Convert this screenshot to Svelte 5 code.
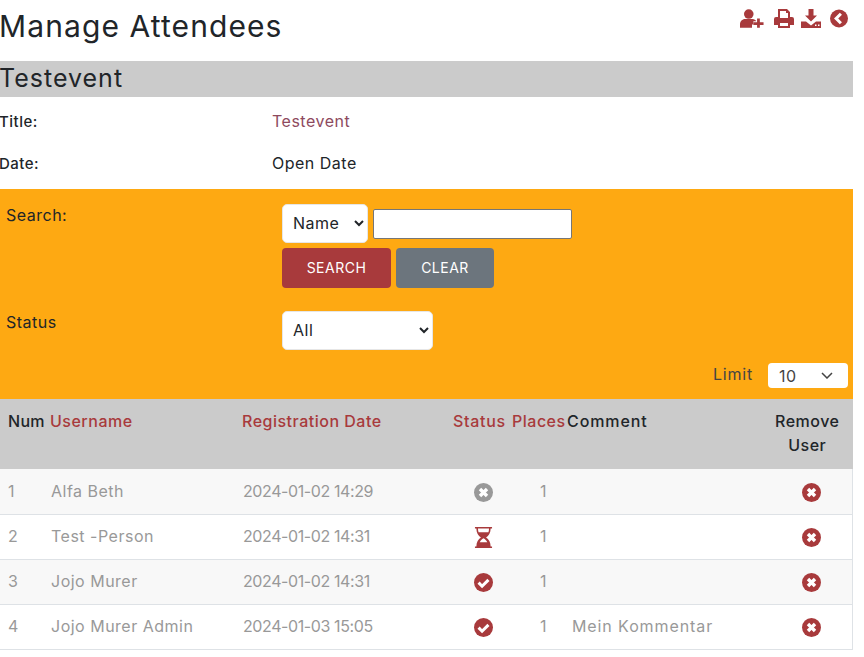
<script>
	const rows = [
		{ num: 1, name: 'Alfa Beth', date: '2024-01-02 14:29', status: 'off', places: 1, comment: '' },
		{ num: 2, name: 'Test -Person', date: '2024-01-02 14:31', status: 'wait', places: 1, comment: '' },
		{ num: 3, name: 'Jojo Murer', date: '2024-01-02 14:31', status: 'ok', places: 1, comment: '' },
		{ num: 4, name: 'Jojo Murer Admin', date: '2024-01-03 15:05', status: 'ok', places: 1, comment: 'Mein Kommentar' }
	];
</script>

{#snippet cross(color)}
	<svg class="state" viewBox="0 0 20 20" aria-hidden="true">
		<circle cx="10" cy="10" r="10" fill={color} />
		<path d="M6.300 6.300l7.400 7.400M13.700 6.300l-7.400 7.400" stroke="#fff" stroke-width="3.600" />
	</svg>
{/snippet}

<div class="page">
	<header class="top">
		<h1>Manage Attendees</h1>
		<div class="tools">
			<svg class="tool user" viewBox="0 0 26 20" aria-hidden="true">
				<circle cx="9.500" cy="5.200" r="5.200" />
				<path d="M0 20v-3.500C0 13 2.500 10.500 5.500 10.500h8c2 0 3.400 1 4 2.500h-3v3.500h-1.500V20z" />
				<path d="M14.500 14h4v-4h3v4h4v3h-4v3h-3v-3h-4z" />
			</svg>
			<svg class="tool print" viewBox="0 0 20 19" aria-hidden="true">
				<path fill-rule="evenodd" d="M4 0h9l3 3v5h2a2 2 0 0 1 2 2v6h-4v3H4v-3H0v-6a2 2 0 0 1 2-2h2zM6 2v7h8V4h-2V2zM6 14v3h8v-3z" />
			</svg>
			<svg class="tool load" viewBox="0 0 20 19" aria-hidden="true">
				<path d="M7.500 0h5v6.500h3.500L10 12.500 4 6.500h3.500z" />
				<path fill-rule="evenodd" d="M0 12.500h5l5 4 5-4h5V19H0zM14 15.500v1.500h1.500v-1.500zM17 15.500v1.500h1.500v-1.500z" />
			</svg>
			<svg class="tool back" viewBox="0 0 19 19" aria-hidden="true">
				<circle cx="9.500" cy="9.500" r="9.500" />
				<path d="M11.500 4.500L6.500 9.500l5 5" fill="none" stroke="#fff" stroke-width="3.200" />
			</svg>
		</div>
	</header>

	<h2>Testevent</h2>

	<dl class="info">
		<dt>Title:</dt>
		<dd class="link">Testevent</dd>
		<dt>Date:</dt>
		<dd>Open Date</dd>
	</dl>

	<section class="filters">
		<div class="filter-row search-row">
			<span class="filter-label">Search:</span>
			<div>
				<div class="inputs">
					<select class="field name-select"><option>Name</option></select>
					<input class="text" type="text" />
				</div>
				<div class="buttons">
					<button class="btn primary" type="button">SEARCH</button>
					<button class="btn secondary" type="button">CLEAR</button>
				</div>
			</div>
		</div>
		<div class="filter-row status-row">
			<span class="filter-label">Status</span>
			<select class="field status-select"><option>All</option></select>
		</div>
		<div class="limit-row">
			<span>Limit</span>
			<div class="limit-select">
				<span>10</span>
				<svg viewBox="0 0 12 7" aria-hidden="true"><path d="M1 1l5 5 5-5" fill="none" stroke="#444" stroke-width="1.500" /></svg>
			</div>
		</div>
	</section>

	<table>
		<thead>
			<tr>
				<th class="c-num">Num</th>
				<th class="c-name sort">Username</th>
				<th class="c-date sort">Registration Date</th>
				<th class="c-status sort">Status</th>
				<th class="c-places sort">Places</th>
				<th class="c-comment">Comment</th>
				<th class="c-remove">Remove User</th>
			</tr>
		</thead>
		<tbody>
			{#each rows as row (row.num)}
				<tr>
					<td class="c-num">{row.num}</td>
					<td class="c-name">{row.name}</td>
					<td class="c-date">{row.date}</td>
					<td class="c-status icon-cell">
						{#if row.status === 'off'}
							{@render cross('#999999')}
						{:else if row.status === 'wait'}
							<svg class="state glass" viewBox="0 0 20 22" aria-hidden="true">
								<path fill="#a83a3c" d="M1 0h18v1.500h-1.500c0 4.500-2 7.500-4.800 9.500 2.800 2 4.800 5 4.800 9.500H19V22H1v-1.500h1.500c0-4.500 2-7.500 4.800-9.500-2.800-2-4.800-5-4.800-9.500H1z" />
								<path fill="#fff" d="M4.200 1.500h11.600c0 1.500-.2 2.800-.6 4H4.800c-.4-1.200-.6-2.500-.6-4z" />
								<path fill="#fff" d="M10 11.800c-1.800 1.200-3.100 2.400-4 4.200h8c-.9-1.800-2.200-3-4-4.200z" />
							</svg>
						{:else}
							<svg class="state" viewBox="0 0 20 20" aria-hidden="true">
								<circle cx="10" cy="10" r="10" fill="#a83a3c" />
								<path d="M4.800 10.200l3.700 3.700 6.700-6.700" fill="none" stroke="#fff" stroke-width="3.200" />
							</svg>
						{/if}
					</td>
					<td class="c-places">{row.places}</td>
					<td class="c-comment">{row.comment}</td>
					<td class="c-remove icon-cell">{@render cross('#a83a3c')}</td>
				</tr>
			{/each}
		</tbody>
	</table>
</div>

<style>
	:global(body) {
		background: #fff;
	}

	.page {
		width: 853px;
		height: 657px;
		overflow: hidden;
		font-family: Inter, 'Open Sans', sans-serif;
		font-size: 16px;
		letter-spacing: 0.5px;
		color: #212529;
	}

	.top {
		display: flex;
		justify-content: space-between;
		height: 61px;
	}

	h1 {
		margin: 0 0 0 -1px;
		padding-top: 7px;
		font-size: 30px;
		line-height: 38px;
		font-weight: 400;
		letter-spacing: 1.100px;
	}

	.tools {
		display: flex;
		align-items: flex-start;
		padding: 9px 5px 0 0;
	}

	.tool {
		display: block;
		height: 19px;
		fill: #a83a3c;
	}

	.user { width: 24px; margin-right: 10px; }
	.print { width: 20px; margin-right: 7px; }
	.load { width: 20px; margin-right: 9px; }
	.back { width: 18px; }

	h2 {
		margin: 0;
		height: 36px;
		background: #cbcbcb;
		font-size: 25px;
		line-height: 35px;
		font-weight: 400;
		letter-spacing: 1px;
		text-indent: -1px;
	}

	.info {
		display: grid;
		grid-template-columns: 272px 1fr;
		grid-auto-rows: 42px;
		margin: 4px 0 0;
		height: 88px;
	}

	.info dt {
		margin-left: -1px;
		line-height: 42px;
		font-weight: 500;
		font-size: 15px;
	}

	.info dd {
		margin: 0;
		line-height: 41px;
	}

	.link {
		color: #8e4a5e;
	}

	.filters {
		height: 210px;
		background: #fea912;
		display: flex;
		flex-direction: column;
	}

	.filter-row {
		display: grid;
		grid-template-columns: 282px 1fr;
		align-items: start;
	}

	.filter-label {
		padding-left: 6px;
		line-height: 23px;
	}

	.search-row {
		padding-top: 15px;
		height: 122px;
		box-sizing: border-box;
	}

	.status-row {
		height: 53px;
		padding-top: 1px;
		box-sizing: border-box;
	}

	.inputs {
		display: flex;
		align-items: center;
		gap: 5px;
	}

	.field {
		box-sizing: border-box;
		height: 39px;
		padding: 0 0 2px 6px;
		background: #fff;
		border: 1px solid #e6e6e6;
		border-radius: 5px;
		font: inherit;
		letter-spacing: 0.5px;
		color: #212529;
	}

	.name-select { width: 86px; }
	.status-select { width: 151px; }

	.text {
		box-sizing: border-box;
		width: 199px;
		height: 30px;
		border: 1px solid #767676;
		border-radius: 2px;
		background: #fff;
	}

	.buttons {
		display: flex;
		gap: 5px;
		margin-top: 5px;
	}

	.btn {
		height: 40px;
		padding: 0 0 1px;
		border: 0;
		border-radius: 4px;
		color: #fff;
		font: inherit;
		font-size: 14px;
		letter-spacing: 0.5px;
	}

	.primary {
		width: 109px;
		background: #a83a3c;
	}

	.secondary {
		width: 98px;
		background: #6c757d;
	}

	.limit-row {
		display: flex;
		justify-content: flex-end;
		align-items: center;
		gap: 15px;
		margin-top: auto;
		padding: 0 5px 11px 0;
		color: #444;
	}

	.limit-row > span {
		margin-top: -3px;
		letter-spacing: 0.8px;
	}

	.limit-select {
		box-sizing: border-box;
		width: 80px;
		height: 25px;
		padding: 0 15px 0 11px;
		display: flex;
		justify-content: space-between;
		align-items: center;
		background: #fff;
		border-radius: 4px;
	}

	.limit-select svg {
		width: 12px;
		height: 7px;
	}

	table {
		width: 853px;
		table-layout: fixed;
		border-collapse: collapse;
	}

	th {
		height: 70px;
		box-sizing: border-box;
		padding: 10px 0 0;
		background: #cbcbcb;
		text-align: left;
		vertical-align: top;
		font-weight: 500;
		letter-spacing: 0.500px;
		line-height: 24px;
	}

	th.sort {
		color: #a83a3c;
	}

	td {
		height: 45px;
		box-sizing: border-box;
		padding: 0 0 1px;
		color: #999;
		background: #fff;
		border-bottom: 1px solid #dee2e6;
		white-space: nowrap;
	}

	tbody tr:nth-child(odd) td {
		background: #f8f8f8;
	}

	tbody td:last-child {
		border-right: 1px solid #dee2e6;
	}

	.c-num { width: 50px; padding-left: 8px; box-sizing: border-box; }
	th.c-num { letter-spacing: 0.300px; }
	.c-name { width: 192px; }
	td.c-name { padding-left: 1px; }
	.c-date { width: 211px; }
	td.c-date { padding-left: 1px; letter-spacing: -0.400px; }
	.c-status { width: 59px; }
	th.c-status { letter-spacing: 0.700px; }
	.c-places { width: 54px; }
	td.c-places { padding-left: 28px; }
	.c-comment { width: 200px; }
	th.c-comment { padding-left: 1px; letter-spacing: 0.900px; }
	td.c-comment { padding-left: 6px; letter-spacing: 0.900px; }
	.c-remove { text-align: center; }
	td.c-remove { padding: 2px 0 0 4px; }
	th.c-remove { padding: 10px 4px 0 0; }

	.icon-cell {
		line-height: 0;
	}

	.c-status.icon-cell {
		padding: 2px 0 0 21px;
	}

	.state {
		width: 19px;
		height: 19px;
		display: inline-block;
	}

	.state.glass {
		height: 21px;
	}
</style>
